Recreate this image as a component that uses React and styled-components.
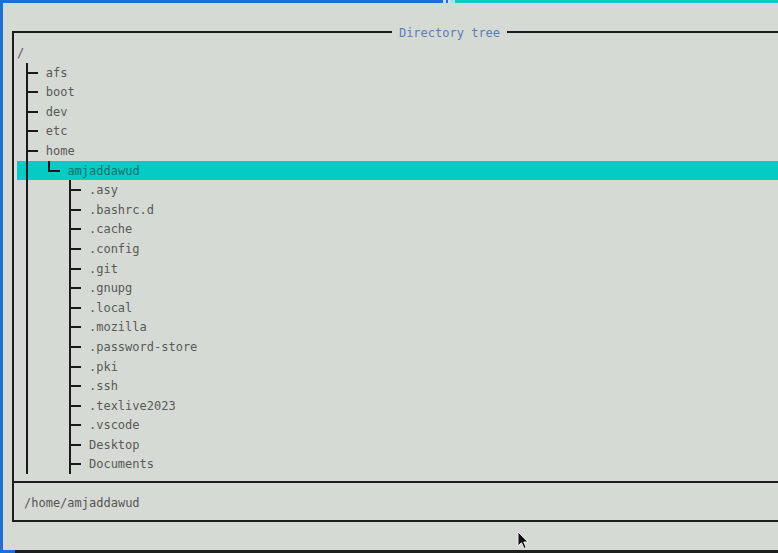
import React from 'react';
import styled, { createGlobalStyle } from 'styled-components';

const CELL = 7.2;
const ROW = 19.6;

const GlobalStyle = createGlobalStyle`
  html, body {
    margin: 0;
    padding: 0;
    background: #d6dad5;
    overflow: hidden;
  }
  body {
    font-family: "DejaVu Sans Mono", "Liberation Mono", monospace;
  }
`;

const Screen = styled.div`
  width: 778px;
  height: 553px;
  display: flex;
  flex-direction: column;
  overflow: hidden;
  background: #d6dad5;
`;

const TopStrip = styled.div`
  height: 3px;
  display: flex;
  flex-shrink: 0;
`;

const StripPart = styled.div`
  height: 100%;
  width: ${(p) => (p.$w ? `${p.$w}px` : 'auto')};
  flex: ${(p) => (p.$w ? '0 0 auto' : '1')};
  background: ${(p) => p.$color};
`;

const Middle = styled.div`
  flex: 1;
  display: flex;
  min-height: 0;
`;

const LeftStrip = styled.div`
  width: 3px;
  background: #1f6fd0;
  flex-shrink: 0;
`;

const Content = styled.div`
  flex: 1;
  padding: 28px 0 0 9px;
  overflow: hidden;
  display: flex;
`;

const Frame = styled.div`
  width: 875px;
  flex-shrink: 0;
  display: flex;
  flex-direction: column;
  align-self: flex-start;
`;

const TitleBar = styled.div`
  height: 2px;
  display: flex;
  align-items: center;
`;

const TitleLine = styled.div`
  flex: 1;
  height: 2px;
  background: #1c1c1c;
`;

const Title = styled.span`
  padding: 1px ${CELL}px 0;
  font-size: 12px;
  line-height: 16px;
  color: #5b7db5;
  white-space: pre;
`;

const Panel = styled.div`
  border: 2px solid #1c1c1c;
  border-top: none;
  display: flex;
  flex-direction: column;
`;

const Tree = styled.div`
  height: 450px;
  box-sizing: border-box;
  padding: 10px 0 0 3px;
  overflow: hidden;
  border-bottom: 2px solid #1c1c1c;
`;

const Row = styled.div`
  display: flex;
  align-items: center;
  height: ${ROW}px;
  font-size: 12px;
  line-height: ${ROW}px;
  white-space: pre;
  color: ${(p) => (p.$selected ? '#17706b' : '#595959')};
  background: ${(p) => (p.$selected ? '#04cbc4' : 'transparent')};
`;

const Indent = styled.span`
  width: ${CELL}px;
  flex-shrink: 0;
`;

const Name = styled.span`
  transform: translateY(1px);
`;

const Footer = styled.div`
  height: 37px;
  box-sizing: border-box;
  display: flex;
  align-items: center;
  padding: 3px 0 0 10px;
  font-size: 12px;
  color: #555;
`;

const BottomStrip = styled.div`
  height: 3px;
  display: flex;
  flex-shrink: 0;
`;

const Cursor = styled.svg`
  position: absolute;
  left: 517px;
  top: 531px;
`;

function Guide({ kind }) {
  const w = CELL * 3;
  return (
    <svg
      width={w}
      height={ROW}
      viewBox={`0 0 ${w} ${ROW}`}
      shapeRendering="crispEdges"
      style={{ flexShrink: 0 }}
    >
      {(kind === 'pipe' || kind === 'tee') && <rect x="2" y="0" width="2" height={ROW} fill="#1a1a1a" />}
      {kind === 'last' && <rect x="2" y="0" width="2" height="10.8" fill="#1a1a1a" />}
      {(kind === 'tee' || kind === 'last') && <rect x="2" y="8.8" width="12" height="2" fill="#1a1a1a" />}
    </svg>
  );
}

const rootKids = ['afs', 'boot', 'dev', 'etc', 'home'];
const homeKids = [
  '.asy', '.bashrc.d', '.cache', '.config', '.git', '.gnupg', '.local', '.mozilla',
  '.password-store', '.pki', '.ssh', '.texlive2023', '.vscode', 'Desktop', 'Documents',
];

const rows = [
  { name: '/', guides: [] },
  ...rootKids.map((name) => ({ name, guides: ['tee'] })),
  { name: 'amjaddawud', guides: ['pipe', 'last'], selected: true },
  ...homeKids.map((name) => ({ name, guides: ['pipe', 'none', 'tee'] })),
];

export default function App() {
  return (
    <Screen>
      <GlobalStyle />
      <TopStrip>
        <StripPart $w={443} $color="#1f6fd0" />
        <StripPart $w={3} $color="#c8dcf4" />
        <StripPart $w={2} $color="#1f6fd0" />
        <StripPart $w={3} $color="#c8dcf4" />
        <StripPart $w={4} $color="#9fe3e0" />
        <StripPart $color="#0cccc4" />
      </TopStrip>
      <Middle>
        <LeftStrip />
        <Content>
          <Frame>
            <TitleBar>
              <TitleLine />
              <Title>Directory tree</Title>
              <TitleLine />
            </TitleBar>
            <Panel>
              <Tree>
                {rows.map((row) => (
                  <Row key={row.name} $selected={row.selected}>
                    {row.guides.length > 0 && <Indent />}
                    {row.guides.map((g, i) => (
                      <Guide key={i} kind={g} />
                    ))}
                    <Name>{row.name}</Name>
                  </Row>
                ))}
              </Tree>
              <Footer>/home/amjaddawud</Footer>
            </Panel>
          </Frame>
        </Content>
      </Middle>
      <BottomStrip>
        <StripPart $w={15} $color="#1f6fd0" />
        <StripPart $color="#1e1e1e" />
      </BottomStrip>
      <Cursor width="12" height="19" viewBox="0 0 12 19">
        <path d="M1 1 L1 15 L4.5 11.8 L7 17.5 L9.2 16.5 L6.8 11 L11 11 Z" fill="#111" stroke="#eee" strokeWidth="1" />
      </Cursor>
    </Screen>
  );
}
